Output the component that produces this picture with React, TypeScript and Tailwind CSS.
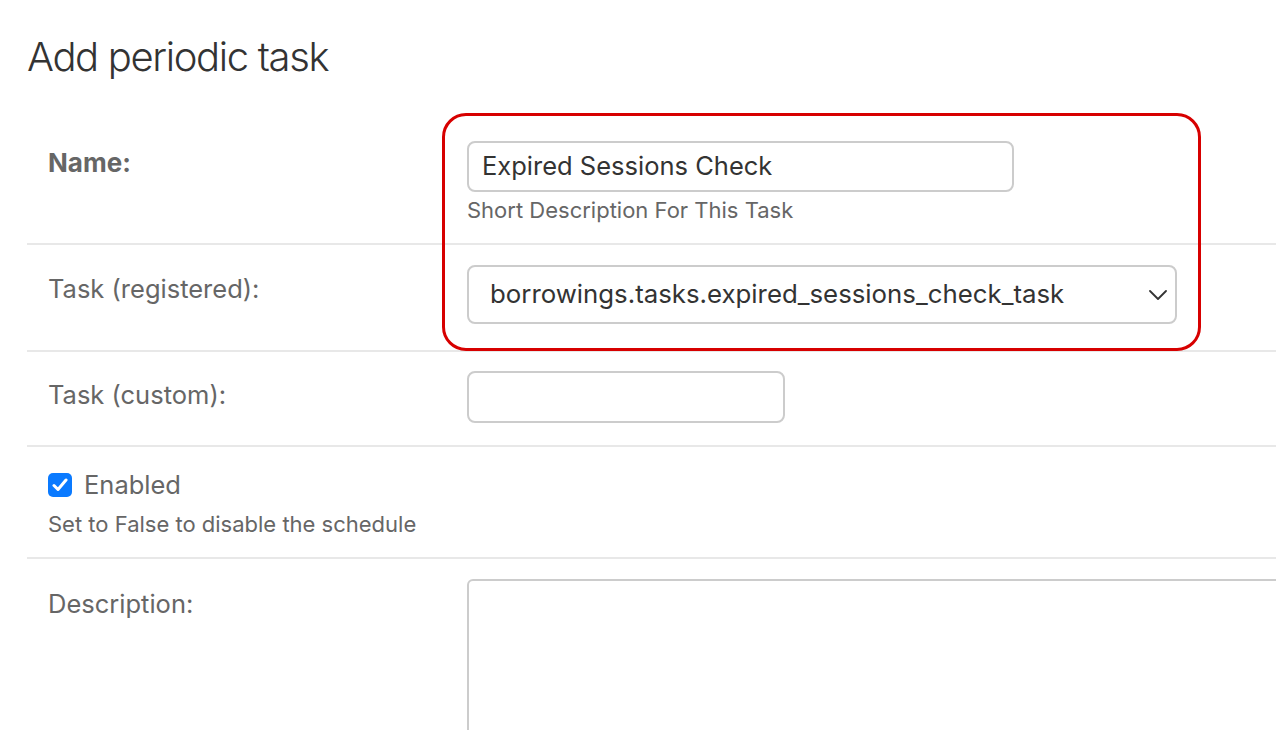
import React from 'react'

const Chevron = () => (
  <svg width="18" height="10" viewBox="0 0 18 10" fill="none">
    <polyline points="1,1 9,9 17,1" stroke="#333" strokeWidth="1.8" strokeLinecap="round" strokeLinejoin="round" />
  </svg>
)

const Checkbox = () => (
  <span className="flex h-[24px] w-[24px] items-center justify-center rounded-[5px] bg-[#0a7aff]">
    <svg width="16" height="14" viewBox="0 0 16 14" fill="none">
      <polyline points="2,7.5 6,11.5 14,2" stroke="#fff" strokeWidth="3" strokeLinecap="round" strokeLinejoin="round" />
    </svg>
  </span>
)

const App = () => {
  return (
    <div className="relative h-[730px] w-full overflow-hidden bg-white font-['Inter',sans-serif]">
      <h1 className="pl-[27px] pt-[33px] text-[40px] font-light leading-[48px] tracking-[-1.35px] text-[#333]">
        Add periodic task
      </h1>

      <div className="ml-[27px] mt-[38px]">
        {/* name */}
        <div className="flex h-[126px] border-b-2 border-[#e8e8e8]">
          <div className="w-[440px] pl-[21px] pt-[28px]">
            <label className="text-[26px] font-bold leading-[32px] text-[#666]">Name:</label>
          </div>
          <div className="pt-[22px]">
            <div className="flex h-[51px] w-[547px] items-center rounded-[8px] border-2 border-[#ccc] pl-[13px] text-[25.5px] text-[#333]">
              Expired Sessions Check
            </div>
            <div className="mt-[5px] text-[22px] leading-[26px] text-[#666]">Short Description For This Task</div>
          </div>
        </div>

        {/* registered */}
        <div className="flex h-[107px] border-b-2 border-[#e8e8e8]">
          <div className="w-[440px] pl-[21px] pt-[28px]">
            <label className="text-[25.5px] leading-[32px] text-[#666]">Task (registered):</label>
          </div>
          <div className="pt-[20px]">
            <div className="flex h-[59px] w-[710px] items-center justify-between rounded-[8px] border-2 border-[#ccc] pl-[21px] pr-[8px] text-[25.8px] text-[#333]">
              <span>borrowings.tasks.expired_sessions_check_task</span>
              <Chevron />
            </div>
          </div>
        </div>

        {/* custom */}
        <div className="flex h-[95px] border-b-2 border-[#e8e8e8]">
          <div className="w-[440px] pl-[21px] pt-[27px]">
            <label className="text-[25.5px] leading-[32px] text-[#666]">Task (custom):</label>
          </div>
          <div className="pt-[19px]">
            <div className="h-[52px] w-[318px] rounded-[8px] border-2 border-[#ccc]" />
          </div>
        </div>

        {/* enabled */}
        <div className="h-[112px] border-b-2 border-[#e8e8e8] pl-[21px] pt-[26px]">
          <div className="flex items-center gap-[12px]">
            <Checkbox />
            <span className="text-[25.5px] leading-[24px] text-[#666]">Enabled</span>
          </div>
          <div className="mt-[14px] text-[22px] leading-[26px] text-[#666]">Set to False to disable the schedule</div>
        </div>

        {/* description */}
        <div className="flex">
          <div className="w-[440px] shrink-0 pl-[21px] pt-[29px]">
            <label className="text-[25.5px] leading-[32px] text-[#666]">Description:</label>
          </div>
          <div className="flex-1 pt-[20px]">
            <div className="h-[300px] w-[900px] rounded-tl-[6px] border-2 border-[#ccc]" />
          </div>
        </div>
      </div>

      {/* annotation */}
      <div className="absolute left-[442px] top-[113px] h-[238px] w-[759px] rounded-[24px] border-[3px] border-[#d70000]" />
    </div>
  )
}

export default App
